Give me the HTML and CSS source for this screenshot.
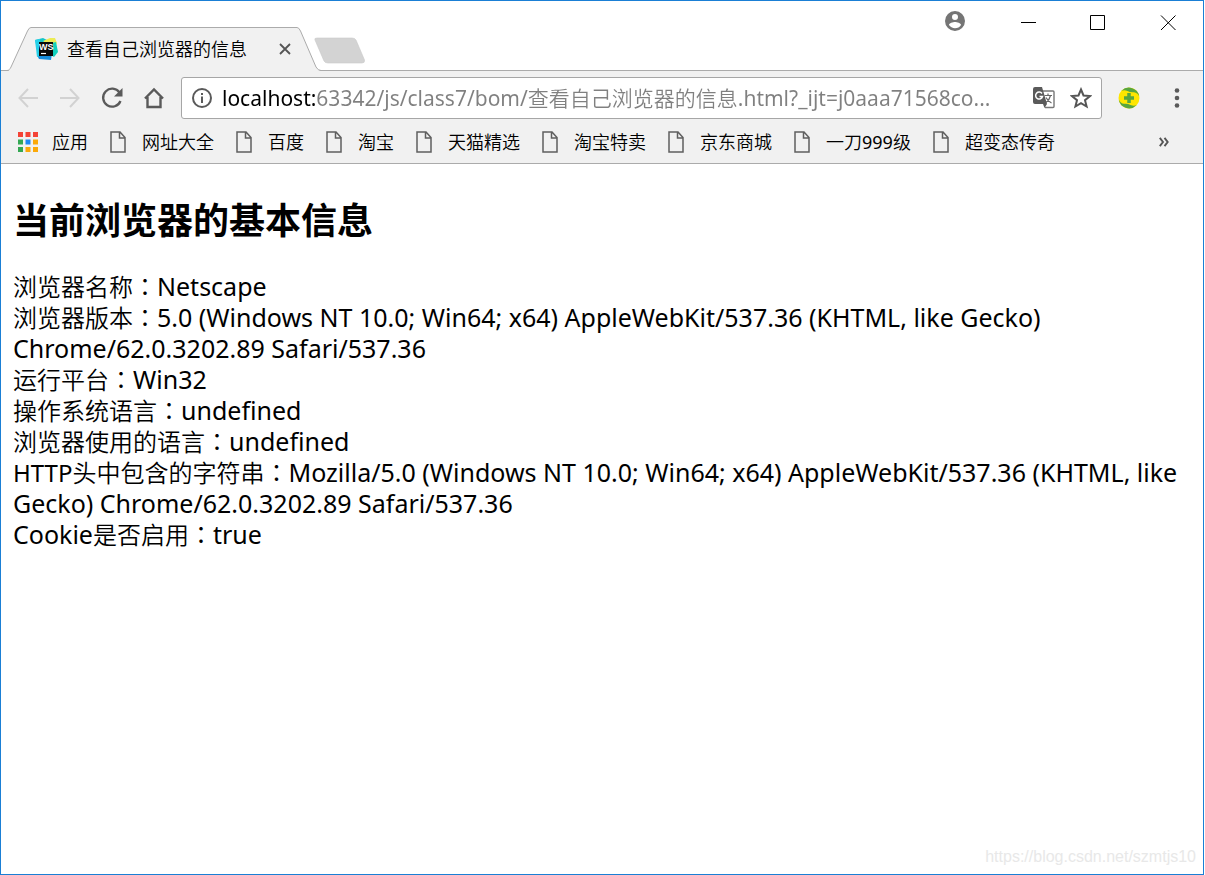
FILE: index.html
```html
<!DOCTYPE html>
<html lang="zh-CN">
<head>
<meta charset="utf-8">
<title>查看自己浏览器的信息</title>
<link rel="stylesheet" href="styles.css">
</head>
<body>
<svg class="defs" aria-hidden="true">
  <symbol id="page" viewBox="0 0 16 22">
    <path d="M1 1H10L15 6.500V21H1Z M9.500 1.500V7H14.500" fill="none" stroke="#5f5f5f" stroke-width="1.500"/>
  </symbol>
</svg>
<div class="window">
  <header class="titlebar">
    <div class="tab">
      <svg class="tab-shape" viewBox="0 0 314 44" aria-hidden="true">
        <path d="M0 44C2 44 3 42.500 4 40L20.500 4Q22 1 24 1H290Q292 1 293.500 4L309 40Q311 43.500 314 44Z" fill="#f1f1f1"/>
        <path d="M0 43.500C2 43.500 3 42 4 40L20.500 4Q22 .5 24 .5H290Q292 .5 293.500 4L309 40Q311 43.500 314 43.500" fill="none" stroke="#ababab"/>
      </svg>
      <svg class="favicon" viewBox="0 0 24 24" aria-hidden="true">
        <path d="M1 3L9 1L15 4L14 20L5 21Z" fill="#15c5c9"/>
        <path d="M9 4L16 1L21 1L23 6L20 12Z" fill="#ecec55"/>
        <path d="M18 6L22 5L24 15L20 20L15 17Z" fill="#10d0bd"/>
        <path d="M3 18L18 16L17 23L5 22Z" fill="#168ddd"/>
        <path d="M1 3L6 2L6 19L3 20Z" fill="#25cfe8"/>
        <rect x="5" y="5" width="14" height="14" fill="#090909"/>
        <text x="5" y="13" class="ws">WS</text>
        <path d="M7 16.500H12" stroke="#fff" stroke-width="1.200"/>
      </svg>
      <span class="tab-title">查看自己浏览器的信息</span>
      <button class="tab-close" aria-label="关闭标签页"><svg width="12" height="12" viewBox="0 0 12 12"><path d="M1 1L11 11M11 1L1 11" stroke="#555" stroke-width="1.800"/></svg></button>
    </div>
    <button class="new-tab" aria-label="新标签页"><svg width="52" height="27" viewBox="0 0 52 27"><path d="M3 1H38Q41 1 42 3L50.500 23Q51 26 48 26H14Q11 26 10 24L1 3Q0 1 3 1Z" fill="#d3d3d3" stroke="#c9c9c9" stroke-width=".6"/></svg></button>
    <div class="controls">
      <button class="avatar" aria-label="用户"><svg width="20" height="20" viewBox="2 2 20 20"><path fill="#757575" d="M12 2a10 10 0 1 0 0 20a10 10 0 0 0 0-20zm0 3a3 3 0 1 1 0 6a3 3 0 0 1 0-6zm0 14.200c-2.500 0-4.710-1.280-6-3.220c.03-1.990 4-3.080 6-3.080s5.970 1.090 6 3.080a7.200 7.200 0 0 1-6 3.220z"/></svg></button>
      <button class="control" aria-label="最小化"><svg width="16" height="16"><path d="M1 7.500H16" stroke="#000"/></svg></button>
      <button class="control" aria-label="最大化"><svg width="16" height="16"><path d="M.5 .5H14.500V14.500H.5Z" fill="none" stroke="#000"/></svg></button>
      <button class="control" aria-label="关闭"><svg width="16" height="16"><path d="M1 .5L15.500 15M15.500 .5L1 15" stroke="#000"/></svg></button>
    </div>
  </header>

  <div class="chrome">
    <div class="toolbar">
      <button class="tool" aria-label="后退"><svg width="20" height="20" viewBox="0 0 20 20"><path d="M20 10H1.500M10 1L1.500 10L10 19" fill="none" stroke="#d2d2d2" stroke-width="2"/></svg></button>
      <button class="tool" aria-label="前进"><svg width="20" height="20" viewBox="0 0 20 20"><path d="M0 10H18.500M10 1L18.500 10L10 19" fill="none" stroke="#d2d2d2" stroke-width="2"/></svg></button>
      <button class="tool" aria-label="重新加载"><svg width="22" height="22" viewBox="0 0 22 22"><path d="M18.500 5.500A9 9 0 1 0 19.500 14" fill="none" stroke="#5a5a5a" stroke-width="2.300"/><path d="M21.500 1V9.500H13Z" fill="#5a5a5a"/></svg></button>
      <button class="tool" aria-label="主页"><svg width="22" height="22" viewBox="0 0 22 22"><path d="M4.500 10V20H17.500V10M2 11.500L11 2.500L20 11.500" fill="none" stroke="#5a5a5a" stroke-width="2.400"/></svg></button>
      <form class="omnibox">
        <button type="button" class="small" aria-label="网站信息"><svg width="20" height="20" viewBox="0 0 20 20"><circle cx="10" cy="10" r="9" fill="none" stroke="#5a5a5a" stroke-width="2"/><path d="M10 8.500V15M10 5V7" stroke="#5a5a5a" stroke-width="2"/></svg></button>
        <input class="url" type="text" aria-label="地址" value="localhost:63342/js/class7/bom/查看自己浏览器的信息.html?_ijt=j0aaa71568co...">
        <button type="button" class="small" aria-label="翻译"><svg width="22" height="22" viewBox="0 0 22 22"><path d="M10 4H20Q21 4 21 5V19.500Q21 20.500 20 20.500H12" fill="#fff" stroke="#777" stroke-width="1.400"/><path d="M2 0H9L14 17H2Q0 17 0 15V2Q0 0 2 0Z M10 17H14L11.500 21Z" fill="#5a5a5a"/><path d="M9 6.500A3.500 3.500 0 1 0 9.500 9.500H6.500" fill="none" stroke="#fff" stroke-width="1.500"/><path d="M11.500 8.500H19M15 6.500V8.500M17.500 8.500Q16.500 13 13 15.500M13 10.500Q15 14.500 18.500 16" fill="none" stroke="#666" stroke-width="1.200"/></svg></button>
        <button type="button" class="small" aria-label="收藏"><svg width="22" height="22" viewBox="0 0 22 22"><path d="M11 2.500L13.500 8.500L20 9L15 13.200L16.600 19.500L11 16.200L5.400 19.500L7 13.200L2 9L8.500 8.500Z" fill="none" stroke="#555" stroke-width="2"/></svg></button>
      </form>
      <button class="ext" aria-label="扩展程序"><svg width="22" height="22" viewBox="0 0 22 22"><circle cx="11" cy="11" r="10.500" fill="#ffe600"/><path d="M3.500 3.800A10.500 10.500 0 0 1 21.300 9.500Q19.500 5.500 16 5.200Q12 5.500 9.500 4Q6.500 2.800 3.500 3.800ZM18.500 18.200A10.500 10.500 0 0 1 .7 12.500Q2.500 16.500 6 16.800Q10 16.500 12.500 18Q15.500 19.200 18.500 18.200Z" fill="#58a63f"/><path d="M11 6V16M6 11H16" stroke="#58a63f" stroke-width="3.500"/></svg></button>
      <button class="ext" aria-label="菜单"><svg width="6" height="20" viewBox="0 0 6 20"><circle cx="3" cy="2.500" r="2.300" fill="#5a5a5a"/><circle cx="3" cy="10" r="2.300" fill="#5a5a5a"/><circle cx="3" cy="17.500" r="2.300" fill="#5a5a5a"/></svg></button>
    </div>
    <nav class="bookmarks">
      <a class="bookmark apps" href="#"><svg width="20" height="20" viewBox="0 0 20 20"><path d="M0 0h5v5H0zM7.500 0h5v5h-5zM15 0h5v5h-5z" fill="#f44336"/><path d="M0 7.500h5v5H0zM0 15h5v5H0z" fill="#34a853"/><path d="M7.500 7.500h5v5h-5z" fill="#1e88f5"/><path d="M15 7.500h5v5h-5zM7.500 15h5v5h-5zM15 15h5v5h-5z" fill="#fba90a"/></svg>应用</a>
      <a class="bookmark" href="#"><svg width="16" height="22"><use href="#page"/></svg>网址大全</a>
      <a class="bookmark" href="#"><svg width="16" height="22"><use href="#page"/></svg>百度</a>
      <a class="bookmark" href="#"><svg width="16" height="22"><use href="#page"/></svg>淘宝</a>
      <a class="bookmark" href="#"><svg width="16" height="22"><use href="#page"/></svg>天猫精选</a>
      <a class="bookmark" href="#"><svg width="16" height="22"><use href="#page"/></svg>淘宝特卖</a>
      <a class="bookmark" href="#"><svg width="16" height="22"><use href="#page"/></svg>京东商城</a>
      <a class="bookmark" href="#"><svg width="16" height="22"><use href="#page"/></svg>一刀999级</a>
      <a class="bookmark" href="#"><svg width="16" height="22"><use href="#page"/></svg>超变态传奇</a>
      <button class="more" aria-label="更多书签"><svg width="10" height="10" viewBox="0 0 10 10"><path d="M.8 .8L4 5L.8 9.200M5.500 .8L8.700 5L5.500 9.200" fill="none" stroke="#555" stroke-width="1.900"/></svg></button>
    </nav>
  </div>

  <main class="content">
    <h2>当前浏览器的基本信息</h2>
    <p>浏览器名称<i lang="zh-TW">：</i><span class="latin">Netscape</span></p>
    <p>浏览器版本<i lang="zh-TW">：</i><span class="latin">5.0 (Windows NT 10.0; Win64; x64) AppleWebKit/537.36 (KHTML, like Gecko) Chrome/62.0.3202.89 Safari/537.36</span></p>
    <p>运行平台<i lang="zh-TW">：</i><span class="latin">Win32</span></p>
    <p>操作系统语言<i lang="zh-TW">：</i><span class="latin">undefined</span></p>
    <p>浏览器使用的语言<i lang="zh-TW">：</i><span class="latin">undefined</span></p>
    <p>HTTP头中包含的字符串<i lang="zh-TW">：</i><span class="latin">Mozilla/5.0 (Windows NT 10.0; Win64; x64) AppleWebKit/537.36 (KHTML, like Gecko) Chrome/62.0.3202.89 Safari/537.36</span></p>
    <p><span class="latin">Cookie</span>是否启用<i lang="zh-TW">：</i><span class="latin">true</span></p>
  </main>
  <span class="watermark">https://blog.csdn.net/szmtjs10</span>
</div>
</body>
</html>
```
FILE: styles.css
```css
* { box-sizing: border-box; }
body {
  margin: 0;
  background: #fff;
  color: #000;
  font-family: "Noto Sans", "Noto Sans CJK SC DemiLight", "Noto Sans CJK SC", sans-serif;
}
button { border: 0; padding: 0; background: none; display: flex; align-items: center; justify-content: center; }
svg { display: block; flex: none; }
.defs { position: absolute; width: 0; height: 0; }
.window {
  position: relative;
  display: flex;
  flex-direction: column;
  min-height: 100vh;
  margin-right: 1px;
  border: 1px solid #1a7fd5;
}

.titlebar { display: flex; height: 70px; border-bottom: 1px solid #ababab; }
.tab {
  position: relative;
  display: flex;
  align-items: center;
  align-self: flex-end;
  width: 314px;
  height: 44px;
  margin: 0 0 -1px 6px;
  padding: 0 30px 0 27px;
}
.tab-shape { position: absolute; left: 0; top: 0; width: 100%; height: 100%; }
.favicon { position: relative; width: 24px; height: 24px; margin-right: 9px; }
.ws { font: bold 9px "Liberation Sans", sans-serif; fill: #fff; }
.tab-title { position: relative; flex: 1; font-size: 18px; line-height: 24px; white-space: nowrap; }
.tab-close { position: relative; }
.new-tab { align-self: flex-end; margin: 0 0 6px -7px; }
.controls { display: flex; height: 43px; margin-left: auto; }
.avatar { width: 40px; margin: 0 18px 3px 0; }
.control { width: 70px; }

.chrome { background: #f1f1f1; border-bottom: 1px solid #ababab; }
.toolbar { display: flex; height: 49px; padding: 6px 2px 0 6px; }
.tool { width: 42px; height: 42px; }
.omnibox {
  display: flex;
  align-items: center;
  flex: 1;
  height: 42px;
  margin: 0 3px 0 6px;
  padding: 0 9px 0 10px;
  border: 1px solid #a6a6a6;
  border-radius: 3px;
  background: #fff;
  gap: 15px;
}
.url {
  flex: 1;
  min-width: 0;
  height: 36px;
  margin-left: -5px;
  padding: 0 0 2px;
  border: 0;
  outline: 0;
  background: linear-gradient(90deg, #000 93px, #808080 93px);
  background-clip: text;
  color: transparent;
  font: 21px "Noto Sans", "Noto Sans CJK SC DemiLight", "Noto Sans CJK SC", sans-serif;
}
.ext { width: 48px; height: 42px; }
.bookmarks { display: flex; align-items: center; height: 43px; padding: 0 34px 0 17px; gap: 22px; }
.bookmark {
  display: flex;
  align-items: center;
  gap: 16px;
  color: #000;
  font-size: 18px;
  line-height: 24px;
  text-decoration: none;
  white-space: nowrap;
}
.apps { gap: 14px; }
.more { margin-left: auto; }

.content { padding: 32px 12px 0; font-size: 24px; line-height: 31px; }
h2 { margin: 0 0 31px; font-family: "Noto Sans CJK SC", sans-serif; font-size: 36px; line-height: 44px; font-weight: 700; }
p { margin: 0; }
i { font-family: "Noto Sans CJK TC DemiLight", "Noto Sans CJK TC", sans-serif; font-style: normal; line-height: 1; }
.latin { font-size: 25px; line-height: 1; }
.watermark {
  position: absolute;
  right: 7px;
  bottom: 7px;
  color: #e8e8e8;
  font: 16px/20px "Liberation Sans", sans-serif;
}
```
